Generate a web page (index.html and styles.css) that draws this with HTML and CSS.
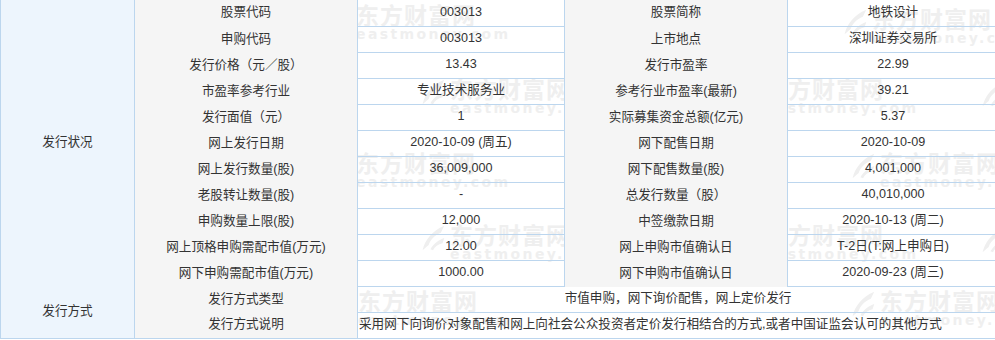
FILE: index.html
```html
<!DOCTYPE html>
<html lang="zh-CN">
<head>
<meta charset="utf-8">
<title>发行状况</title>
<link rel="stylesheet" href="styles.css">
</head>
<body>
<div class="sheet">
  <div class="wm-layer" aria-hidden="true">
    <div class="wm wm-a1"><svg class="swoosh" viewBox="0 0 30 32"><path d="M3 30 C6 18 14 8 28 2 L24 10 C17 13 12 18 10 24 Z M12 29 C16 22 22 18 28 16 L26 22 C21 23 17 26 15 30 Z"/></svg><div class="wm-txt"><span class="wm-cn">东方财富网</span><span class="wm-en">eastmoney.com</span></div></div>
    <div class="wm wm-a2"><svg class="swoosh" viewBox="0 0 30 32"><path d="M3 30 C6 18 14 8 28 2 L24 10 C17 13 12 18 10 24 Z M12 29 C16 22 22 18 28 16 L26 22 C21 23 17 26 15 30 Z"/></svg><div class="wm-txt"><span class="wm-cn">东方财富网</span><span class="wm-en">eastmoney.com</span></div></div>
    <div class="wm wm-b1"><svg class="swoosh" viewBox="0 0 30 32"><path d="M3 30 C6 18 14 8 28 2 L24 10 C17 13 12 18 10 24 Z M12 29 C16 22 22 18 28 16 L26 22 C21 23 17 26 15 30 Z"/></svg><div class="wm-txt"><span class="wm-cn">东方财富网</span><span class="wm-en">eastmoney.com</span></div></div>
    <div class="wm wm-b2"><svg class="swoosh" viewBox="0 0 30 32"><path d="M3 30 C6 18 14 8 28 2 L24 10 C17 13 12 18 10 24 Z M12 29 C16 22 22 18 28 16 L26 22 C21 23 17 26 15 30 Z"/></svg><div class="wm-txt"><span class="wm-cn">东方财富网</span><span class="wm-en">eastmoney.com</span></div></div>
    <div class="wm wm-b3"><svg class="swoosh" viewBox="0 0 30 32"><path d="M3 30 C6 18 14 8 28 2 L24 10 C17 13 12 18 10 24 Z M12 29 C16 22 22 18 28 16 L26 22 C21 23 17 26 15 30 Z"/></svg><div class="wm-txt"><span class="wm-cn">东方财富网</span><span class="wm-en">eastmoney.com</span></div></div>
    <div class="wm wm-c1"><svg class="swoosh" viewBox="0 0 30 32"><path d="M3 30 C6 18 14 8 28 2 L24 10 C17 13 12 18 10 24 Z M12 29 C16 22 22 18 28 16 L26 22 C21 23 17 26 15 30 Z"/></svg><div class="wm-txt"><span class="wm-cn">东方财富网</span><span class="wm-en">eastmoney.com</span></div></div>
    <div class="wm wm-c2"><svg class="swoosh" viewBox="0 0 30 32"><path d="M3 30 C6 18 14 8 28 2 L24 10 C17 13 12 18 10 24 Z M12 29 C16 22 22 18 28 16 L26 22 C21 23 17 26 15 30 Z"/></svg><div class="wm-txt"><span class="wm-cn">东方财富网</span><span class="wm-en">eastmoney.com</span></div></div>
    <div class="wm wm-d1"><svg class="swoosh" viewBox="0 0 30 32"><path d="M3 30 C6 18 14 8 28 2 L24 10 C17 13 12 18 10 24 Z M12 29 C16 22 22 18 28 16 L26 22 C21 23 17 26 15 30 Z"/></svg><div class="wm-txt"><span class="wm-cn">东方财富网</span><span class="wm-en">eastmoney.com</span></div></div>
    <div class="wm wm-d2"><svg class="swoosh" viewBox="0 0 30 32"><path d="M3 30 C6 18 14 8 28 2 L24 10 C17 13 12 18 10 24 Z M12 29 C16 22 22 18 28 16 L26 22 C21 23 17 26 15 30 Z"/></svg><div class="wm-txt"><span class="wm-cn">东方财富网</span><span class="wm-en">eastmoney.com</span></div></div>
    <div class="wm wm-d3"><svg class="swoosh" viewBox="0 0 30 32"><path d="M3 30 C6 18 14 8 28 2 L24 10 C17 13 12 18 10 24 Z M12 29 C16 22 22 18 28 16 L26 22 C21 23 17 26 15 30 Z"/></svg><div class="wm-txt"><span class="wm-cn">东方财富网</span><span class="wm-en">eastmoney.com</span></div></div>
    <div class="wm wm-e1"><svg class="swoosh" viewBox="0 0 30 32"><path d="M3 30 C6 18 14 8 28 2 L24 10 C17 13 12 18 10 24 Z M12 29 C16 22 22 18 28 16 L26 22 C21 23 17 26 15 30 Z"/></svg><div class="wm-txt"><span class="wm-cn">东方财富网</span><span class="wm-en">eastmoney.com</span></div></div>
    <div class="wm wm-e2"><svg class="swoosh" viewBox="0 0 30 32"><path d="M3 30 C6 18 14 8 28 2 L24 10 C17 13 12 18 10 24 Z M12 29 C16 22 22 18 28 16 L26 22 C21 23 17 26 15 30 Z"/></svg><div class="wm-txt"><span class="wm-cn">东方财富网</span><span class="wm-en">eastmoney.com</span></div></div>
  </div>

  <div class="grid">
    <div class="sec sec-top">发行状况</div>
    <div class="lbl">股票代码</div><div class="val">003013</div><div class="lbl">股票简称</div><div class="val end">地铁设计</div>
    <div class="lbl">申购代码</div><div class="val">003013</div><div class="lbl">上市地点</div><div class="val end">深圳证券交易所</div>
    <div class="lbl">发行价格（元／股）</div><div class="val">13.43</div><div class="lbl">发行市盈率</div><div class="val end">22.99</div>
    <div class="lbl">市盈率参考行业</div><div class="val">专业技术服务业</div><div class="lbl">参考行业市盈率(最新)</div><div class="val end">39.21</div>
    <div class="lbl">发行面值（元）</div><div class="val">1</div><div class="lbl">实际募集资金总额(亿元)</div><div class="val end">5.37</div>
    <div class="lbl">网上发行日期</div><div class="val">2020-10-09 (周五)</div><div class="lbl">网下配售日期</div><div class="val end">2020-10-09</div>
    <div class="lbl">网上发行数量(股)</div><div class="val">36,009,000</div><div class="lbl">网下配售数量(股)</div><div class="val end">4,001,000</div>
    <div class="lbl">老股转让数量(股)</div><div class="val">-</div><div class="lbl">总发行数量（股）</div><div class="val end">40,010,000</div>
    <div class="lbl">申购数量上限(股)</div><div class="val">12,000</div><div class="lbl">中签缴款日期</div><div class="val end">2020-10-13 (周二)</div>
    <div class="lbl">网上顶格申购需配市值(万元)</div><div class="val">12.00</div><div class="lbl">网上申购市值确认日</div><div class="val end">T-2日(T:网上申购日)</div>
    <div class="lbl">网下申购需配市值(万元)</div><div class="val">1000.00</div><div class="lbl">网下申购市值确认日</div><div class="val end">2020-09-23 (周三)</div>

    <div class="sec sec-bottom">发行方式</div>
    <div class="lbl">发行方式类型</div><div class="wide">市值申购，网下询价配售，网上定价发行</div>
    <div class="lbl lbl-last">发行方式说明</div><div class="wide wide-left">采用网下向询价对象配售和网上向社会公众投资者定价发行相结合的方式,或者中国证监会认可的其他方式</div>
  </div>
</div>
</body>
</html>
```

FILE: styles.css
```css
* { box-sizing: border-box; }

html, body {
  margin: 0;
  padding: 0;
  background: #ffffff;
}

body {
  font-family: "Liberation Sans", "Noto Sans CJK SC", sans-serif;
  font-size: 12.6px;
  color: #333333;
}

.sheet {
  position: relative;
  width: 995px;
  height: 340px;
  overflow: hidden;
}

/* watermark layer behind the table */
.wm-layer {
  position: absolute;
  inset: 0;
  z-index: 0;
}

.wm {
  position: absolute;
  display: flex;
  align-items: flex-start;
  gap: 4px;
  color: #efefef;
  white-space: nowrap;
}

.swoosh {
  width: 26px;
  height: 30px;
  fill: #efefef;
  margin-top: 2px;
}

.wm-txt {
  display: flex;
  flex-direction: column;
}

.wm-cn {
  font-family: "Noto Sans CJK SC", sans-serif;
  font-weight: 700;
  font-size: 23px;
  line-height: 26px;
  letter-spacing: 1px;
}

.wm-en {
  font-family: "DejaVu Sans", sans-serif;
  font-weight: 700;
  font-size: 14px;
  line-height: 14px;
  letter-spacing: 2.4px;
}

.wm-a1 { left: 326px; top: 1px; }
.wm-a2 { left: 842px; top: 5px; }
.wm-b1 { left: 420px; top: 75px; }
.wm-b2 { left: 734px; top: 75px; }
.wm-b3 { left: 980px; top: 77px; }
.wm-c1 { left: 326px; top: 149px; }
.wm-c2 { left: 850px; top: 149px; }
.wm-d1 { left: 420px; top: 221px; }
.wm-d2 { left: 734px; top: 221px; }
.wm-d3 { left: 980px; top: 223px; }
.wm-e1 { left: 328px; top: 287px; }
.wm-e2 { left: 850px; top: 287px; }

/* table grid */
.grid {
  position: relative;
  z-index: 1;
  display: grid;
  grid-template-columns: 134px 223px 207px 223px 210px;
  grid-template-rows: 27px repeat(12, 26px);
  width: 998px;
  border-left: 1px solid #bcd6ee;
}

.grid > div {
  display: flex;
  align-items: center;
  justify-content: center;
  padding-bottom: 3px;
  white-space: nowrap;
  line-height: 16px;
}

.sec {
  grid-column: 1;
  background: #edf5fd;
  border-right: 1px solid #bcd6ee;
}

.sec-top { grid-row: span 11; }

.sec-bottom {
  grid-row: span 2;
  border-bottom: 1px solid #bcd6ee;
}

.lbl {
  background: #f5f5f5;
  border-right: 1px solid #bcd6ee;
}

.lbl-last { border-bottom: 1px solid #bcd6ee; }

.val {
  border-right: 1px solid #bcd6ee;
  border-bottom: 1px solid #bcd6ee;
}

.val.end { border-right: none; }

.wide {
  grid-column: span 3;
  border-bottom: 1px solid #bcd6ee;
}

.grid > .wide-left {
  justify-content: flex-start;
  padding-left: 1px;
}
```
